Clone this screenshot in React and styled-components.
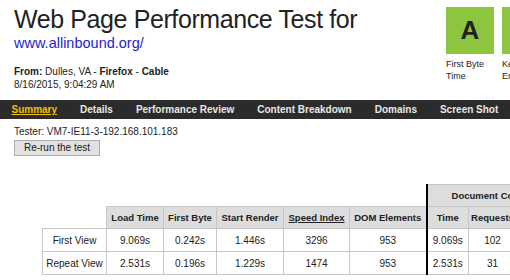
import React from 'react';
import styled, { createGlobalStyle } from 'styled-components';

const GlobalStyle = createGlobalStyle`
  html, body {
    margin: 0;
    padding: 0;
    background: #fff;
    overflow: hidden;
  }
  body {
    font-family: "Liberation Sans", Arial, Helvetica, sans-serif;
    color: #222;
  }
`;

const Page = styled.div`
  width: 640px;
`;

const Header = styled.div`
  display: grid;
  grid-template-columns: 432px auto;
  padding-left: 14px;
  height: 100px;
`;

const Title = styled.h1`
  margin: 4px 0 0;
  font-size: 25px;
  font-weight: normal;
  letter-spacing: -0.4px;
  line-height: 30px;
  color: #222;
`;

const SiteLink = styled.a`
  display: block;
  margin-top: 1px;
  font-size: 14.5px;
  line-height: 16px;
  color: #2424c8;
  text-decoration: none;
`;

const Meta = styled.div`
  margin-top: 14px;
  font-size: 10px;
  line-height: 13px;
  color: #222;
`;

const Grades = styled.div`
  display: flex;
  gap: 8px;
  margin-top: 7px;
  align-items: flex-start;
`;

const Grade = styled.div`
  width: 48px;
`;

const GradeBox = styled.div`
  height: 47px;
  background: #8cc63e;
  color: #222;
  font-size: 26px;
  font-weight: bold;
  line-height: 47px;
  text-align: center;
`;

const GradeLabel = styled.div`
  margin-top: 4px;
  font-size: 9px;
  line-height: 12px;
  color: #222;
`;

const Nav = styled.div`
  display: flex;
  height: 19px;
  background: #2b2b2b;
`;

const NavItem = styled.a`
  padding: 0 11.5px;
  font-size: 10px;
  font-weight: bold;
  line-height: 19px;
  white-space: nowrap;
  color: ${p => (p.$active ? '#f2c000' : '#e8e8e8')};
  text-decoration: ${p => (p.$active ? 'underline' : 'none')};
`;

const Content = styled.div`
  padding-left: 14px;
`;

const Tester = styled.div`
  margin-top: 6px;
  font-size: 10px;
  line-height: 13px;
`;

const Button = styled.button`
  display: block;
  margin-top: 2px;
  width: 86px;
  height: 16px;
  padding: 0;
  background: #e1e1e1;
  border: 1px solid #adadad;
  font-family: inherit;
  font-size: 10px;
  line-height: 14px;
  color: #222;
`;

const Table = styled.table`
  margin: 28px 0 0 28px;
  border-collapse: collapse;
  table-layout: fixed;
  font-size: 10px;
  color: #222;
`;

const Row = styled.tr`
  height: ${p => p.$h}px;
`;

const Blank = styled.th`
  padding: 0;
  border: none;
`;

const Th = styled.th`
  padding: 0;
  background: #dddddd;
  border: 1px solid #c6c6c6;
  border-left: ${p => (p.$divider ? '2px solid #000' : '1px solid #c6c6c6')};
  font-size: 9.5px;
  font-weight: bold;
  text-align: center;
  white-space: nowrap;
  overflow: hidden;
`;

const HeadLink = styled.span`
  text-decoration: underline;
`;

const Td = styled.td`
  padding: 0;
  border: 1px solid #c6c6c6;
  border-left: ${p => (p.$divider ? '2px solid #000' : '1px solid #c6c6c6')};
  text-align: center;
  white-space: nowrap;
`;

const columns = [64, 57, 53, 67, 66, 77, 42, 48, 52];

const headers = ['Load Time', 'First Byte', 'Start Render', 'Speed Index', 'DOM Elements', 'Time', 'Requests', 'Bytes In'];

const rows = [
  { label: 'First View', values: ['9.069s', '0.242s', '1.446s', '3296', '953', '9.069s', '102', '1,844 KB'] },
  { label: 'Repeat View', values: ['2.531s', '0.196s', '1.229s', '1474', '953', '2.531s', '31', '412 KB'] },
];

export default function App() {
  return (
    <Page>
      <GlobalStyle />
      <Header>
        <div>
          <Title>Web Page Performance Test for</Title>
          <SiteLink href="#">www.allinbound.org/</SiteLink>
          <Meta>
            <div><b>From:</b> Dulles, VA - <b>Firefox</b> - <b>Cable</b></div>
            <div>8/16/2015, 9:04:29 AM</div>
          </Meta>
        </div>
        <Grades>
          <Grade>
            <GradeBox>A</GradeBox>
            <GradeLabel>First Byte Time</GradeLabel>
          </Grade>
          <Grade>
            <GradeBox>A</GradeBox>
            <GradeLabel>Keep-alive Enabled</GradeLabel>
          </Grade>
        </Grades>
      </Header>

      <Nav>
        <NavItem $active>Summary</NavItem>
        <NavItem>Details</NavItem>
        <NavItem>Performance Review</NavItem>
        <NavItem>Content Breakdown</NavItem>
        <NavItem>Domains</NavItem>
        <NavItem>Screen Shot</NavItem>
      </Nav>

      <Content>
        <Tester>Tester: VM7-IE11-3-192.168.101.183</Tester>
        <Button>Re-run the test</Button>

        <Table>
          <colgroup>
            {columns.map((w, i) => <col key={i} style={{ width: w }} />)}
          </colgroup>
          <thead>
            <Row $h={22}>
              <Blank colSpan={6} />
              <Th colSpan={3} $divider>Document Complete</Th>
            </Row>
            <Row $h={22}>
              <Blank />
              {headers.map((h, i) => (
                <Th key={h} $divider={i === 5}>
                  {h === 'Speed Index' ? <HeadLink>{h}</HeadLink> : h}
                </Th>
              ))}
            </Row>
          </thead>
          <tbody>
            {rows.map(r => (
              <Row $h={23} key={r.label}>
                <Td>{r.label}</Td>
                {r.values.map((v, i) => <Td key={i} $divider={i === 5}>{v}</Td>)}
              </Row>
            ))}
          </tbody>
        </Table>
      </Content>
    </Page>
  );
}
